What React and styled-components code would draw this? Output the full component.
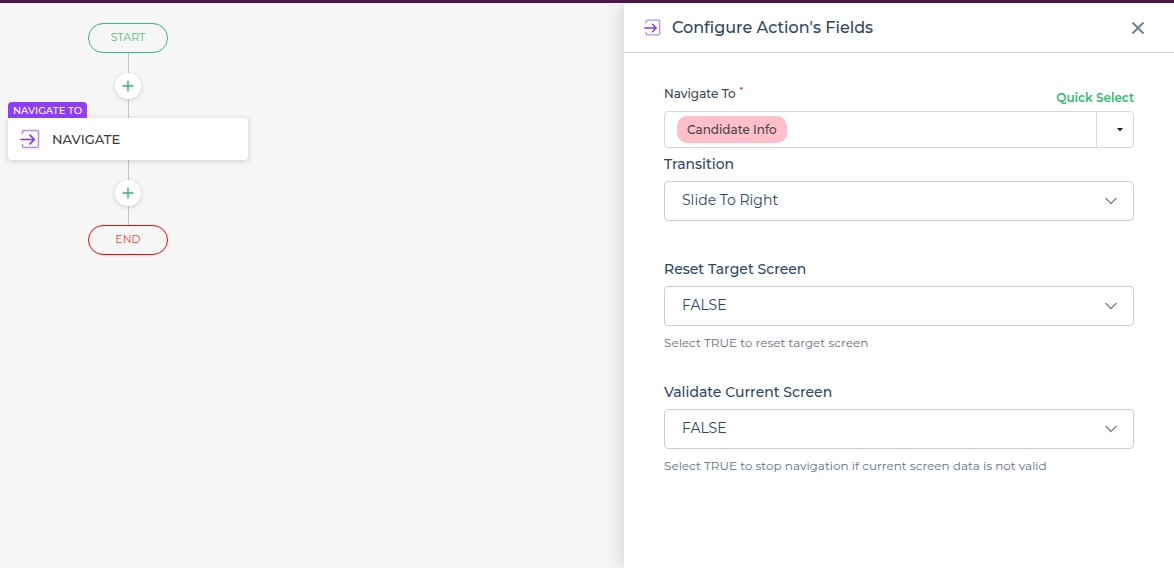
import React from "react";
import styled, { createGlobalStyle } from "styled-components";

const GlobalStyle = createGlobalStyle`
  * { box-sizing: border-box; }
  body {
    margin: 0;
    background: #f6f6f6;
    font-family: Montserrat, Inter, "Open Sans", sans-serif;
    color: #2e4765;
  }
  button, select { font-family: inherit; }
`;

const Page = styled.div`
  display: flex;
  min-height: 100vh;
  border-top: 3px solid #491749;
`;

const Canvas = styled.main`
  flex: 1;
  min-width: 0;
  padding: 20px 8px;
`;

const Flow = styled.div`
  display: flex;
  flex-direction: column;
  align-items: center;
  width: 240px;
`;

const Terminal = styled.div`
  width: 80px;
  height: 30px;
  border: 1px solid ${(p) => p.$border};
  border-radius: 15px;
  color: ${(p) => p.$text};
  font-size: 11px;
  font-weight: 400;
  line-height: 26px;
  text-align: center;
`;

const Connector = styled.div`
  display: flex;
  align-items: center;
  justify-content: center;
  width: 26px;
  height: 65px;
  background: linear-gradient(#c6c6c6, #c6c6c6) center / 1px 100% no-repeat;
`;

const AddButton = styled.button`
  display: grid;
  place-items: center;
  width: 26px;
  height: 26px;
  padding: 0;
  border: 0;
  border-radius: 50%;
  background: #fff;
  box-shadow: 0 1px 5px rgba(0, 0, 0, 0.16);
`;

const ActionCard = styled.div`
  position: relative;
  display: flex;
  align-items: center;
  gap: 12px;
  width: 100%;
  height: 42px;
  padding: 0 12px;
  border-radius: 0 4px 4px 4px;
  background: #fff;
  box-shadow: 0 1px 6px rgba(0, 0, 0, 0.16);
  color: #3d3d3d;
  font-size: 13px;
  font-weight: 500;
`;

const ActionTag = styled.span`
  position: absolute;
  left: 0;
  bottom: 100%;
  padding: 0 5px;
  border-radius: 4px 4px 0 0;
  background: #8e3dfb;
  color: #fff;
  font-size: 10px;
  font-weight: 500;
  line-height: 17px;
  height: 16px;
  white-space: nowrap;
`;

const Panel = styled.aside`
  flex: 0 0 550px;
  background: #fff;
  box-shadow: 0 0 20px rgba(0, 0, 0, 0.18);
  clip-path: inset(0 0 0 -30px);
`;

const PanelHeader = styled.header`
  display: flex;
  align-items: center;
  gap: 11px;
  height: 50px;
  padding: 0 28px 0 20px;
  border-bottom: 1px solid #cfd6db;
`;

const PanelTitle = styled.h1`
  flex: 1;
  margin: 0;
  font-size: 16px;
  font-weight: 500;
  line-height: 24px;
`;

const CloseButton = styled.button`
  display: grid;
  place-items: center;
  width: 16px;
  height: 16px;
  padding: 0;
  border: 0;
  background: none;
`;

const Form = styled.form`
  padding: 30px 40px;
`;

const TargetHead = styled.div`
  display: flex;
  justify-content: space-between;
  align-items: flex-end;
  height: 28px;
`;

const TargetLabel = styled.span`
  align-self: flex-start;
  color: #37474f;
  font-size: 12px;
  font-weight: 500;
  line-height: 22px;
`;

const Required = styled.sup`
  margin-left: 4px;
  color: #ff0000;
  font-size: 8px;
  line-height: 1;
`;

const QuickSelect = styled.button`
  padding: 0 0 3px;
  border: 0;
  background: none;
  color: #2ebd71;
  font-size: 12px;
  font-weight: 600;
  line-height: 20px;
`;

const TargetBox = styled.div`
  display: flex;
  height: 37px;
  margin-bottom: 6px;
  border: 1px solid #d9d9d9;
  border-radius: 4px;
`;

const TargetValue = styled.div`
  display: flex;
  flex: 1;
  align-items: center;
  padding: 0 12px;
  border-right: 1px solid #d9d9d9;
`;

const Chip = styled.span`
  padding: 0 10px;
  border-radius: 10px;
  background: #ffbfca;
  color: #4a4548;
  font-size: 12px;
  font-weight: 500;
  line-height: 27px;
`;

const CaretButton = styled.button`
  display: grid;
  place-items: center;
  width: 36px;
  padding: 0 0 0 10px;
  border: 0;
  background: none;
`;

const Field = styled.div`
  display: flex;
  flex-direction: column;
  margin-bottom: ${(p) => p.$gap}px;
`;

const FieldLabel = styled.label`
  margin-bottom: 7px;
  font-size: 14px;
  font-weight: 500;
  line-height: 20px;
`;

const SelectWrap = styled.div`
  position: relative;
`;

const Select = styled.select`
  display: block;
  width: 100%;
  height: 40px;
  padding: 0 40px 2px 17px;
  border: 1px solid #cdcedb;
  border-radius: 4px;
  appearance: none;
  background: #fff;
  color: #2e4765;
  font-size: 14px;
`;

const SelectArrow = styled.svg`
  position: absolute;
  top: 16px;
  right: 17px;
  pointer-events: none;
`;

const Hint = styled.p`
  margin: 7px 0 0;
  color: #5f7287;
  font-size: 12px;
  line-height: 20px;
`;

function EnterIcon({ size }) {
  return (
    <svg width={size} height={size} viewBox="0 0 20 20" fill="none" aria-hidden="true">
      <path
        d="M2.5 5V3a1.6 1.6 0 0 1 1.6-1.6h12.8A1.6 1.6 0 0 1 18.5 3v14a1.6 1.6 0 0 1-1.6 1.6H4.1A1.6 1.6 0 0 1 2.5 17v-2"
        stroke="#b78bfc"
        strokeWidth="1.5"
      />
      <path d="M1 10.5h13M10 6.1l4.3 4.4-4.3 4.4" stroke="#8338f5" strokeWidth="1.7" strokeLinecap="round" />
    </svg>
  );
}

function AddStep() {
  return (
    <Connector>
      <AddButton type="button" aria-label="Add step">
        <svg width="12" height="12" viewBox="0 0 12 12" stroke="#2bbd6c" strokeWidth="1.4">
          <path d="M.5 6h11M6 .5v11" />
        </svg>
      </AddButton>
    </Connector>
  );
}

function SelectField({ id, label, value, hint, gap }) {
  return (
    <Field $gap={gap}>
      <FieldLabel htmlFor={id}>{label}</FieldLabel>
      <SelectWrap>
        <Select id={id} defaultValue={value}>
          <option>{value}</option>
        </Select>
        <SelectArrow width="12" height="8" viewBox="0 0 12 8" fill="none" stroke="#77879a" strokeWidth="1.4">
          <path d="M.5 1L6 6.5 11.5 1" />
        </SelectArrow>
      </SelectWrap>
      {hint && <Hint>{hint}</Hint>}
    </Field>
  );
}

export default function App() {
  return (
    <>
      <GlobalStyle />
      <Page>
        <Canvas>
          <Flow>
            <Terminal $border="#2ebd71" $text="#4cbf82">START</Terminal>
            <AddStep />
            <ActionCard>
              <ActionTag>NAVIGATE TO</ActionTag>
              <EnterIcon size={20} />
              NAVIGATE
            </ActionCard>
            <AddStep />
            <Terminal $border="#ff0000" $text="#f8453c">END</Terminal>
          </Flow>
        </Canvas>
        <Panel>
          <PanelHeader>
            <EnterIcon size={17} />
            <PanelTitle>Configure Action's Fields</PanelTitle>
            <CloseButton type="button" aria-label="Close">
              <svg width="14" height="14" viewBox="0 0 14 14" stroke="#75838f" strokeWidth="2">
                <path d="M1.5 1.5l11 11M12.5 1.5l-11 11" />
              </svg>
            </CloseButton>
          </PanelHeader>
          <Form>
            <TargetHead>
              <TargetLabel id="target-label">
                Navigate To<Required>*</Required>
              </TargetLabel>
              <QuickSelect type="button">Quick Select</QuickSelect>
            </TargetHead>
            <TargetBox role="group" aria-labelledby="target-label">
              <TargetValue>
                <Chip>Candidate Info</Chip>
              </TargetValue>
              <CaretButton type="button" aria-label="Show screens">
                <svg width="6" height="4" viewBox="0 0 6 4" fill="#222">
                  <path d="M0 0h6L3 3.5z" />
                </svg>
              </CaretButton>
            </TargetBox>
            <SelectField id="transition" label="Transition" value="Slide To Right" gap={38} />
            <SelectField
              id="reset"
              label="Reset Target Screen"
              value="FALSE"
              hint="Select TRUE to reset target screen"
              gap={29}
            />
            <SelectField
              id="validate"
              label="Validate Current Screen"
              value="FALSE"
              hint="Select TRUE to stop navigation if current screen data is not valid"
              gap={0}
            />
          </Form>
        </Panel>
      </Page>
    </>
  );
}
